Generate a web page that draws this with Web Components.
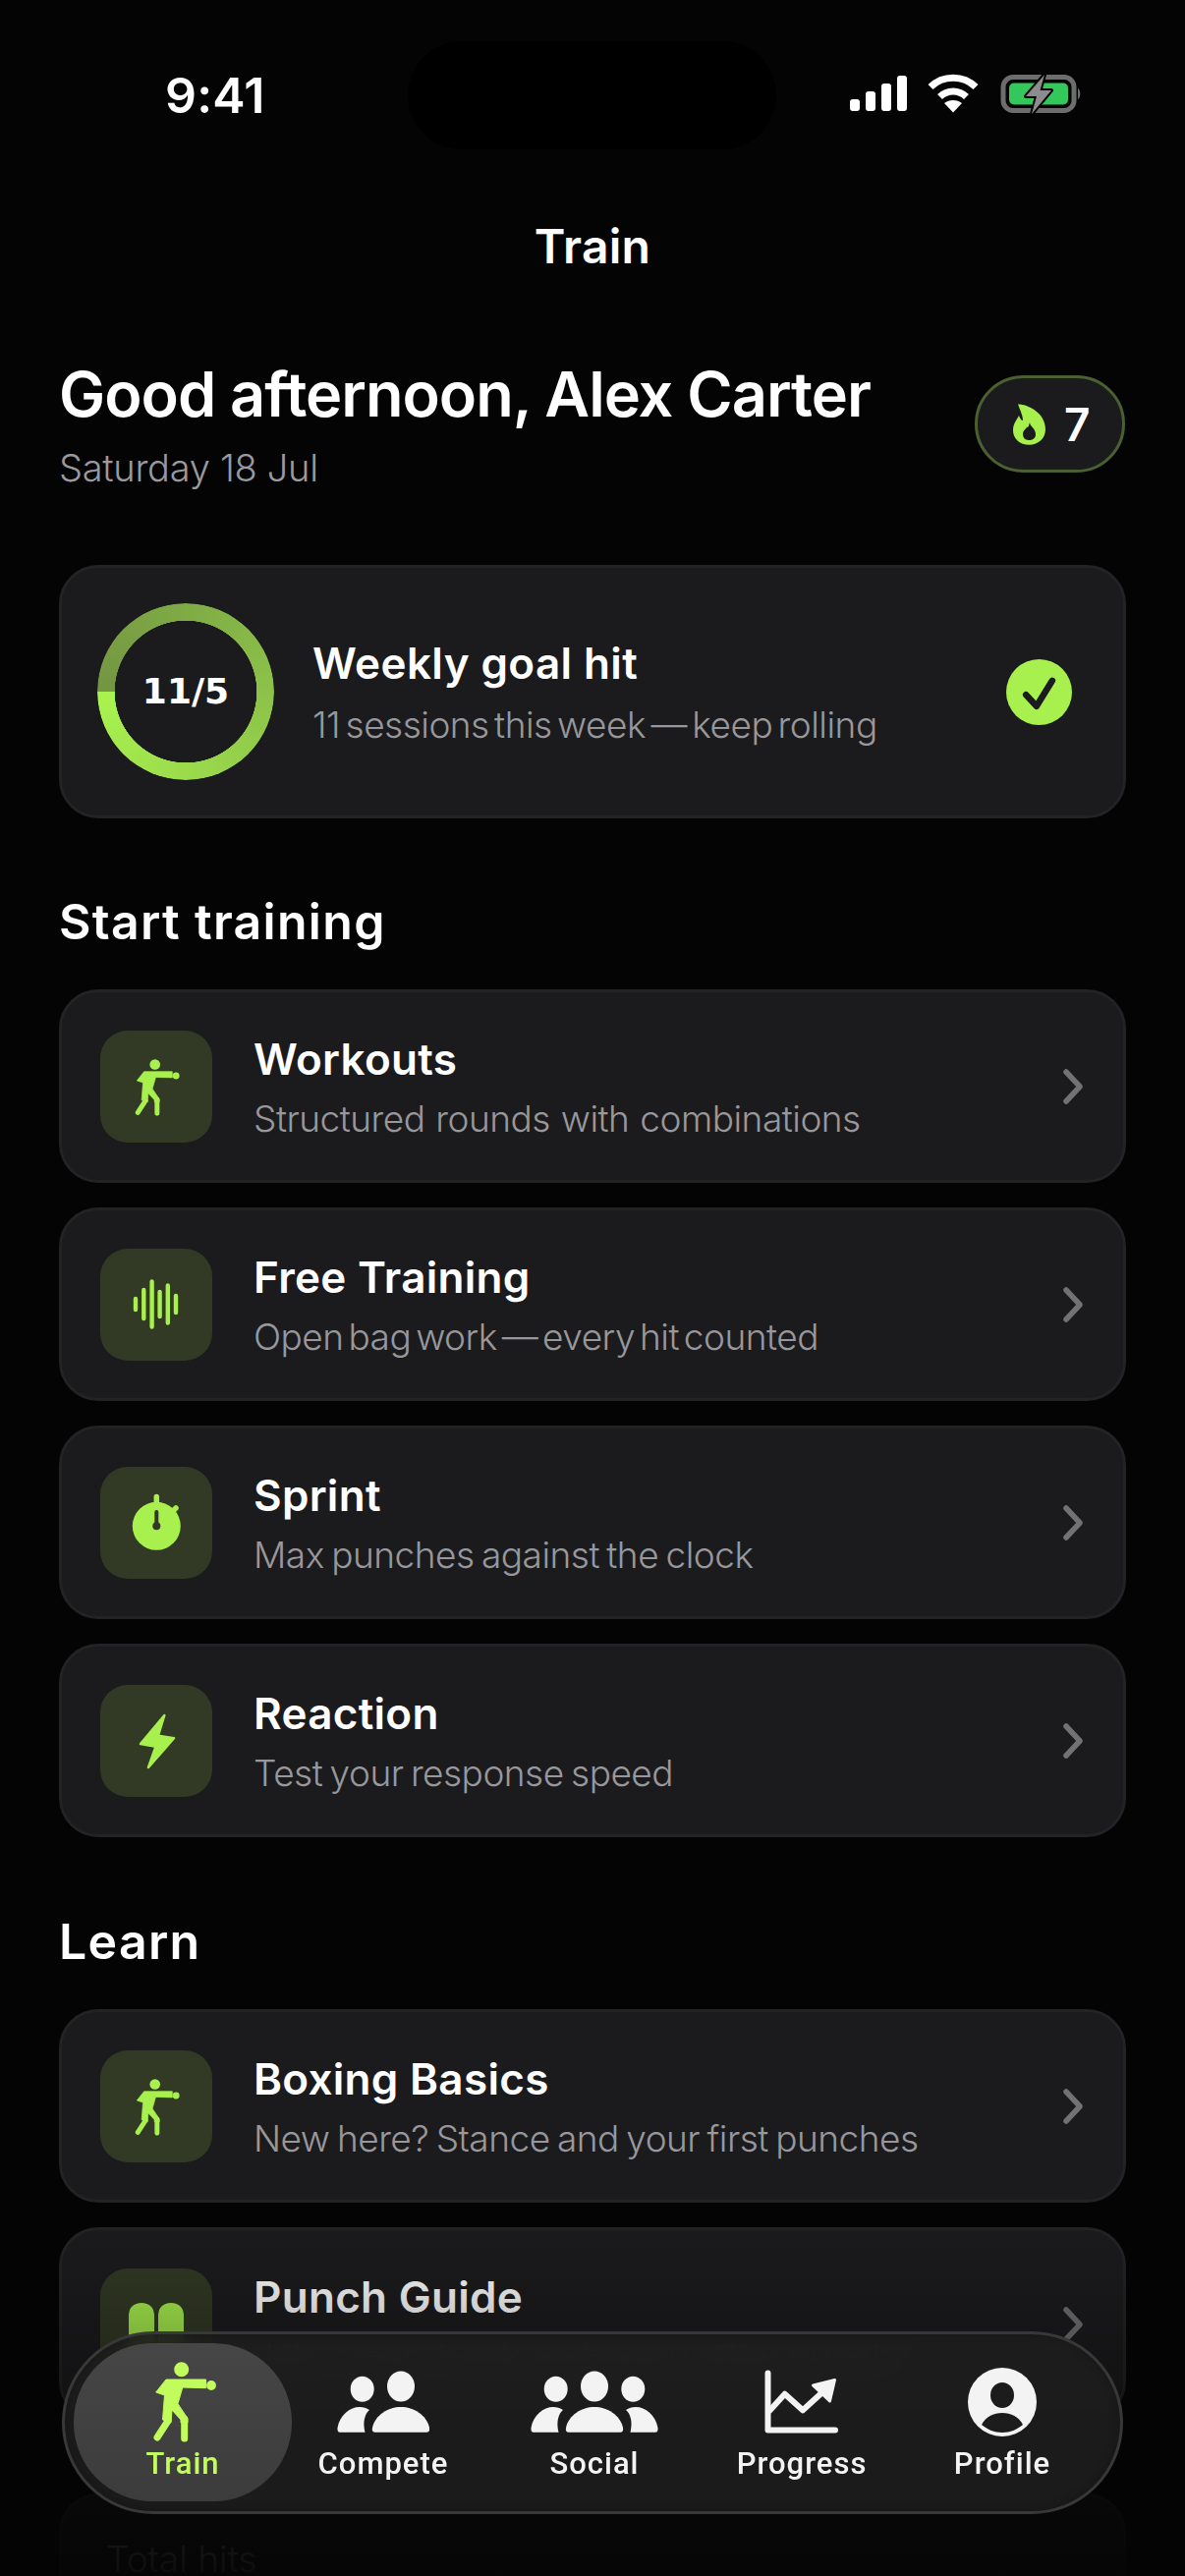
<!DOCTYPE html>
<html>
<head>
<meta charset="utf-8">
<title>Train</title>
<style>
    html, body { margin: 0; padding: 0; background: #040404; }
    body { width: 1206px; height: 2622px; overflow: hidden; font-family: Inter, "Liberation Sans", sans-serif; color: #fff; }
    .tile-icon { display: block; width: 114px; height: 114px; color: #a8f04e; }
    .defs { position: absolute; width: 0; height: 0; }
    tab-item svg { display: block; }
</style>
</head>
<body>

<template id="phone-screen">
<style>
    :host { display: block; position: relative; width: 1206px; height: 2622px; overflow: hidden; background: #040404; }
    .scroll { display: flex; flex-direction: column; height: 2622px; overflow: hidden; }
    .fade { position: absolute; left: 0; right: 0; bottom: 0; height: 360px; pointer-events: none;
        background: linear-gradient(to bottom, rgba(4,4,4,0) 0%, rgba(4,4,4,.35) 45%, rgba(4,4,4,.8) 75%, rgba(4,4,4,.94) 100%); }
</style>
<div class="scroll"><slot></slot></div>
<div class="fade"></div>
<slot name="overlay"></slot>
</template>

<template id="status-bar">
<style>
    :host { display: flex; align-items: flex-start; height: 194px; flex: none; padding: 42px 0 0 168px; box-sizing: border-box; }
    .time { flex: none; font: 600 50px/110px Inter, sans-serif; letter-spacing: .2px; width: 247px; }
    .island { flex: none; width: 375px; height: 110px; border-radius: 55px; background: #000; }
    .icons { flex: none; display: flex; align-items: center; height: 110px; margin-left: 74px; }
    svg { display: block; }
</style>
<div class="time">9:41</div>
<div class="island"></div>
<div class="icons">
    <svg width="256" height="44" viewBox="0 0 256 44">
        <g fill="#fff">
            <rect x="1" y="26" width="10" height="12" rx="3"/>
            <rect x="17" y="18" width="10" height="20" rx="3"/>
            <rect x="33" y="10" width="10" height="28" rx="3"/>
            <rect x="49" y="2" width="10" height="36" rx="3"/>
        </g>
        <g fill="none" stroke="#fff" stroke-width="7">
            <path d="M83 13.500C95.500 1 116.500 1 129 13.500"/>
            <path d="M92.500 23.500C100 16 112 16 119.500 23.500"/>
        </g>
        <path d="M97 30C102 26 110 26 115 30L106 39.500Z" fill="#fff"/>
        <rect x="157" y="3.500" width="72" height="34" rx="10" fill="none" stroke="#6d6d6d" stroke-width="5"/>
        <rect x="163" y="9.500" width="60" height="22" rx="5" fill="#34c759"/>
        <path d="M233 15C236 16 236 25 233 26Z" fill="#6d6d6d"/>
        <path d="M199 1L180 23H191L186 41L206 17H194.500Z" fill="#8c8c8c" stroke="#000" stroke-width="4" stroke-linejoin="round" paint-order="stroke"/>
    </svg>
</div>
</template>

<template id="page-title">
<style>
    :host { display: block; flex: none; height: 112px; text-align: center; font: 600 48px/114px Inter, sans-serif; letter-spacing: .3px; color: #fff; }
</style>
<slot></slot>
</template>

<template id="greeting-head">
<style>
    :host { display: flex; flex: none; justify-content: space-between; align-items: center; padding: 0 60px; margin-top: 57px; margin-bottom: 75px; }
    .name { font: 600 63px/76px Inter, sans-serif; letter-spacing: -1px; color: #fff; white-space: nowrap; }
    .date { font: 300 38px/48px Inter, sans-serif; letter-spacing: -.3px; color: #9a9a9e; margin-top: 13px; }
</style>
<div>
    <div class="name"><slot name="name"></slot></div>
    <div class="date"><slot name="date"></slot></div>
</div>
<slot name="badge"></slot>
</template>

<template id="streak-badge">
<style>
    :host { display: flex; align-items: center; gap: 19px; width: 153px; height: 99px; box-sizing: border-box; padding-left: 36px; background: #1b1b1d; border: 3px solid #4a6030; border-radius: 50px; font: 600 46px/1 Inter, sans-serif; color: #fff; margin-right: 1px; }
    svg { display: block; }
</style>
<svg width="33" height="42" viewBox="0 0 33 42">
    <path d="M5 .5C13 0 33 8 33 26C33 35 26 41.700 16.500 41.700C7 41.700 0 36 0 27C0 20 4 16 6 12C7.500 16 9 17 10 17C10 12 7 6 5 .5Z" fill="#a8f04e"/>
    <path d="M17 19C17 23 23 25 23 31C23 35 20 37 16 37C12 37 10 34 10 31C10 27 13 26 14 23.500C15 25 16 23 17 19Z" fill="#1b1b1d"/>
</svg>
<slot></slot>
</template>

<template id="goal-card">
<style>
    :host { display: flex; flex: none; align-items: center; box-sizing: border-box; height: 258px; margin: 0 60px; padding: 0 0 0 36px; background: #1b1b1d; border: 3px solid #232325; border-radius: 40px; }
    .ring { position: relative; flex: none; width: 180px; height: 180px; display: flex; align-items: center; justify-content: center; }
    .arc { position: absolute; inset: 0; border-radius: 50%; background: conic-gradient(from 270deg, #749542, #7fab45 25%, #8cc249 50%, #9bdb4c 75%, #a9f34f);
        -webkit-mask: radial-gradient(circle closest-side, transparent 72px, #000 72.500px); mask: radial-gradient(circle closest-side, transparent 72px, #000 72.500px); }
    .count { position: relative; font: 700 36px/1 "DejaVu Sans", sans-serif; color: #fff; }
    .text { flex: 1; margin-left: 39px; }
    .title { font: 600 44px/56px Inter, sans-serif; letter-spacing: .4px; color: #fff; }
    .sub { font: 300 37px/48px Inter, sans-serif; letter-spacing: -.5px; word-spacing: -4.500px; color: #98989c; margin-top: 11px; }
    .check { flex: none; margin-right: 52px; width: 67px; height: 67px; display: block; }
</style>
<div class="ring"><div class="arc"></div><div class="count"><slot name="count"></slot></div></div>
<div class="text">
    <div class="title"><slot name="title"></slot></div>
    <div class="sub"><slot name="sub"></slot></div>
</div>
<svg class="check" viewBox="0 0 67 67">
    <circle cx="33.500" cy="33.500" r="33.500" fill="#a8f04e"/>
    <path d="M20.200 36.200L30.900 47.800L46.900 21.800" fill="none" stroke="#1b1b1d" stroke-width="6.500" stroke-linecap="round" stroke-linejoin="round"/>
</svg>
</template>

<template id="section-title">
<style>
    :host { display: block; flex: none; padding: 0 60px; font: 600 50px/58px Inter, sans-serif; letter-spacing: 1.300px; color: #fff; }
</style>
<slot></slot>
</template>

<template id="train-row">
<style>
    :host { display: flex; flex: none; align-items: center; box-sizing: border-box; height: 197px; margin: 0 60px; padding: 0 40px 0 39px; background: #1b1b1d; border: 3px solid #232325; border-radius: 40px; }
    .tile { flex: none; width: 114px; height: 114px; border-radius: 28px; background: #323924; }
    .text { flex: 1; min-width: 0; margin-left: 42px; padding-top: 3px; }
    .title { font: 600 44px/54px Inter, sans-serif; letter-spacing: .3px; color: #fff; }
    .sub { font: 300 37px/48px Inter, sans-serif; letter-spacing: -.5px; word-spacing: -2.500px; color: #98989c; margin-top: 10px; white-space: nowrap; }
    .chev { flex: none; display: block; width: 22px; height: 36px; }
</style>
<div class="tile"><slot name="icon"></slot></div>
<div class="text">
    <div class="title"><slot name="title"></slot></div>
    <div class="sub"><slot name="sub"></slot></div>
</div>
<svg class="chev" viewBox="0 0 22 36"><path d="M4 3L18 18L4 33" fill="none" stroke="#727275" stroke-width="5.500" stroke-linecap="round" stroke-linejoin="round"/></svg>
</template>

<template id="stat-card">
<style>
    :host { display: block; flex: none; box-sizing: border-box; height: 240px; margin: 74px 60px 0; padding: 40px 45px; background: #1b1b1d; border: 3px solid #232325; border-radius: 40px; font: 300 37px/48px Inter, sans-serif; color: #98989c; }
</style>
<slot></slot>
</template>

<template id="tab-bar">
<style>
    :host { display: grid; grid-template-columns: 222px 186px 244px 178px 230px; position: absolute; left: 63px; right: 63px; bottom: 63px; height: 186px; box-sizing: border-box; padding: 9px 5px 10px 9px; border-radius: 93px;
        border: 3px solid #383838; background: linear-gradient(to bottom, rgba(30,30,30,.9), rgba(28,28,28,.97)); -webkit-backdrop-filter: blur(16px); backdrop-filter: blur(16px); box-shadow: inset 0 0 10px rgba(0,0,0,.25); }
</style>
<slot></slot>
</template>

<template id="tab-item">
<style>
    :host { display: flex; flex-direction: column; align-items: center; box-sizing: border-box; height: 161px; padding-top: 18px; border-radius: 80px; color: #f3f3f3; font: 500 31px/42px Roboto, sans-serif; letter-spacing: 1px; }
    :host([active]) { background: linear-gradient(to bottom, #464646, #3c3c3c); color: #c2fb5c; }
    .icon { height: 84px; display: flex; align-items: center; justify-content: center; }
</style>
<div class="icon"><slot name="icon"></slot></div>
<slot></slot>
</template>

<svg class="defs" aria-hidden="true">
    <symbol id="boxer" viewBox="0 0 67 82">
        <circle cx="31.700" cy="7.700" r="7.500" fill="currentColor"/>
        <circle cx="62" cy="24" r="4.900" fill="currentColor"/>
        <path d="M5.700 31L16 18H56.600V26.700L32.800 26L28 42.700L38 57.700V62H31V59L22 49L21 62L12.500 59L14.500 34Z" fill="currentColor" stroke="currentColor" stroke-width="1" stroke-linejoin="round"/>
        <path d="M34.700 58V78M18 60L7 77" fill="none" stroke="currentColor" stroke-width="7" stroke-linecap="round"/>
    </symbol>
    <symbol id="people" viewBox="0 0 132 66">
        <g fill="currentColor">
            <ellipse cx="66" cy="17" rx="14" ry="15.500"/>
            <ellipse cx="26.700" cy="19.700" rx="12" ry="13"/>
            <ellipse cx="105.300" cy="19.700" rx="12" ry="13"/>
            <path d="M40 63.700Q36 63.700 37 59C40 46 53 38 66 38C79 38 92 46 95 59Q96 63.700 92 63.700Z"/>
            <path d="M4 63.700Q1 63.700 1.500 59C4 46 14 38 24 38C28 38 31 39 34 41C29 45 27 54 29.500 63.700Z"/>
            <path d="M128 63.700Q131 63.700 130.500 59C128 46 118 38 108 38C104 38 101 39 98 41C103 45 105 54 102.500 63.700Z"/>
        </g>
    </symbol>
    <symbol id="pair" viewBox="0 0 94 66">
        <g fill="currentColor">
            <ellipse cx="65" cy="17" rx="14" ry="15.500"/>
            <ellipse cx="25.700" cy="19.700" rx="12" ry="13"/>
            <path d="M39 63.700Q35 63.700 36 59C39 46 52 38 65 38C78 38 91 46 94 59Q95 63.700 91 63.700Z"/>
            <path d="M3 63.700Q0 63.700 .5 59C3 46 13 38 23 38C27 38 30 39 33 41C28 45 26 54 28.500 63.700Z"/>
        </g>
    </symbol>
</svg>

<phone-screen>
    <status-bar></status-bar>
    <page-title>Train</page-title>
    <greeting-head>
        <span slot="name">Good afternoon, Alex Carter</span>
        <span slot="date">Saturday 18 Jul</span>
        <streak-badge slot="badge">7</streak-badge>
    </greeting-head>
    <goal-card>
        <span slot="count">11/5</span>
        <span slot="title">Weekly goal hit</span>
        <span slot="sub">11 sessions this week — keep rolling</span>
    </goal-card>

    <section-title style="margin-top:76px;margin-bottom:40px">Start training</section-title>
    <train-row style="margin-bottom:25px">
        <svg slot="icon" class="tile-icon" viewBox="0 0 114 114"><use href="#boxer" x="33" y="29" width="48" height="58"/></svg>
        <span slot="title">Workouts</span>
        <span slot="sub" style="word-spacing:1px">Structured rounds with combinations</span>
    </train-row>
    <train-row style="margin-bottom:25px">
        <svg slot="icon" class="tile-icon" viewBox="0 0 114 114" fill="none" stroke="currentColor" stroke-width="4.400" stroke-linecap="round">
            <path d="M36 51V62M44.300 42V71M52.600 33.500V79.500M60.600 44V69M68.800 37.500V75.500M77 48V65"/>
        </svg>
        <span slot="title">Free Training</span>
        <span slot="sub" style="word-spacing:-5px">Open bag work — every hit counted</span>
    </train-row>
    <train-row style="margin-bottom:25px">
        <svg slot="icon" class="tile-icon" viewBox="0 0 114 114">
            <circle cx="57.300" cy="60.300" r="24.500" fill="currentColor"/>
            <path d="M57.300 36V30.500M72 47L77 42" stroke="currentColor" stroke-width="5.500" stroke-linecap="round"/>
            <path d="M57.300 61V46" stroke="#323924" stroke-width="4" stroke-linecap="round"/>
            <circle cx="57.300" cy="60.300" r="4" fill="#323924"/>
        </svg>
        <span slot="title">Sprint</span>
        <span slot="sub">Max punches against the clock</span>
    </train-row>
    <train-row>
        <svg slot="icon" class="tile-icon" viewBox="0 0 114 114">
            <path d="M65.300 31L41 60L56.500 62.700L49 84L75 54.300L59 51.700Z" fill="currentColor" stroke="currentColor" stroke-width="2.500" stroke-linejoin="round"/>
        </svg>
        <span slot="title">Reaction</span>
        <span slot="sub">Test your response speed</span>
    </train-row>

    <section-title style="margin-top:77px;margin-bottom:40px">Learn</section-title>
    <train-row style="margin-bottom:25px">
        <svg slot="icon" class="tile-icon" viewBox="0 0 114 114"><use href="#boxer" x="33" y="29" width="48" height="58"/></svg>
        <span slot="title">Boxing Basics</span>
        <span slot="sub">New here? Stance and your first punches</span>
    </train-row>
    <train-row>
        <svg slot="icon" class="tile-icon" viewBox="0 0 114 114" fill="currentColor">
            <path d="M29 90V48C29 40 34 35 42 35C50 35 55 40 55 48V90Z"/>
            <path d="M59 90V48C59 40 64 35 72 35C80 35 85 40 85 48V90Z"/>
        </svg>
        <span slot="title">Punch Guide</span>
        <span slot="sub">Jab, cross, hook and every other punch</span>
    </train-row>
    <stat-card>Total hits</stat-card>

    <tab-bar slot="overlay">
        <tab-item active>
            <svg slot="icon" width="67" height="82" viewBox="0 0 67 82"><use href="#boxer" width="67" height="82"/></svg>
            Train
        </tab-item>
        <tab-item>
            <svg slot="icon" width="94" height="66" viewBox="0 0 94 66"><use href="#pair" width="94" height="66"/></svg>
            Compete
        </tab-item>
        <tab-item>
            <svg slot="icon" width="132" height="66" viewBox="0 0 132 66"><use href="#people" width="132" height="66"/></svg>
            Social
        </tab-item>
        <tab-item>
            <svg slot="icon" width="78" height="66" viewBox="0 0 78 66" fill="none" stroke="currentColor" stroke-width="6" stroke-linecap="round" stroke-linejoin="round">
                <path d="M4.500 3.500V61.500H73"/>
                <path d="M6.700 41.300L21.700 24.700L40 41.300L60 23"/>
                <path d="M72.500 10.500L50.500 16L67.500 32Z" fill="currentColor" stroke-width="3"/>
            </svg>
            Progress
        </tab-item>
        <tab-item>
            <svg slot="icon" width="70" height="70" viewBox="0 0 70 70">
                <ellipse cx="35" cy="35" rx="35" ry="35" fill="currentColor"/>
                <ellipse cx="35" cy="28" rx="12" ry="13" fill="#1c1c1c"/>
                <path d="M14 58C18 50 26 46 35 46C44 46 52 50 56 58C50 63 43 66 35 66C27 66 20 63 14 58Z" fill="#1c1c1c"/>
            </svg>
            Profile
        </tab-item>
    </tab-bar>
</phone-screen>

<script>
    // plain wrapper: each tag clones the template with the same id
    class TemplateElement extends HTMLElement {
        constructor() {
            super();
            let shadowRoot = this.attachShadow({mode: 'open'});
            const t = document.getElementById(this.localName);
            shadowRoot.appendChild(t.content.cloneNode(true));
        }
    }
    class PhoneScreen extends TemplateElement {}
    class StatusBar extends TemplateElement {}
    class PageTitle extends TemplateElement {}
    class GreetingHead extends TemplateElement {}
    class StreakBadge extends TemplateElement {}
    class GoalCard extends TemplateElement {}
    class SectionTitle extends TemplateElement {}
    class TrainRow extends TemplateElement {}
    class StatCard extends TemplateElement {}
    class TabBar extends TemplateElement {}
    class TabItem extends TemplateElement {}

    customElements.define('phone-screen', PhoneScreen);
    customElements.define('status-bar', StatusBar);
    customElements.define('page-title', PageTitle);
    customElements.define('greeting-head', GreetingHead);
    customElements.define('streak-badge', StreakBadge);
    customElements.define('goal-card', GoalCard);
    customElements.define('section-title', SectionTitle);
    customElements.define('train-row', TrainRow);
    customElements.define('stat-card', StatCard);
    customElements.define('tab-bar', TabBar);
    customElements.define('tab-item', TabItem);
</script>
</body>
</html>
